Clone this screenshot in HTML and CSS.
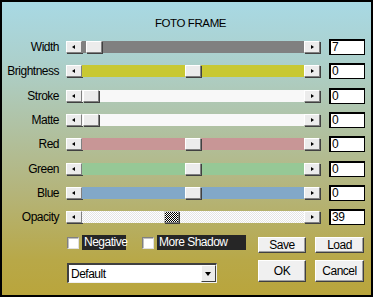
FILE: index.html
```html
<!DOCTYPE html>
<html>
<head>
<meta charset="utf-8">
<link rel="stylesheet" href="styles.css">
</head>
<body>
<div class="window">
  <div class="title">FOTO FRAME</div>
  <div class="rows">
    <div class="row">
      <span class="label">Width</span>
      <div class="slider"><span class="arrow left"></span><div class="track c-gray"><span class="thumb" style="left:4px"></span></div><span class="arrow right"></span></div>
      <div class="value">7</div>
    </div>
    <div class="row">
      <span class="label">Brightness</span>
      <div class="slider"><span class="arrow left"></span><div class="track c-yellow"><span class="thumb" style="left:103px"></span></div><span class="arrow right"></span></div>
      <div class="value">0</div>
    </div>
    <div class="row">
      <span class="label">Stroke</span>
      <div class="slider"><span class="arrow left"></span><div class="track c-white"><span class="thumb" style="left:1px"></span></div><span class="arrow right"></span></div>
      <div class="value">0</div>
    </div>
    <div class="row">
      <span class="label">Matte</span>
      <div class="slider"><span class="arrow left"></span><div class="track c-white"><span class="thumb" style="left:1px"></span></div><span class="arrow right"></span></div>
      <div class="value">0</div>
    </div>
    <div class="row">
      <span class="label">Red</span>
      <div class="slider"><span class="arrow left"></span><div class="track c-red"><span class="thumb" style="left:103px"></span></div><span class="arrow right"></span></div>
      <div class="value">0</div>
    </div>
    <div class="row">
      <span class="label">Green</span>
      <div class="slider"><span class="arrow left"></span><div class="track c-green"><span class="thumb" style="left:103px"></span></div><span class="arrow right"></span></div>
      <div class="value">0</div>
    </div>
    <div class="row">
      <span class="label">Blue</span>
      <div class="slider"><span class="arrow left"></span><div class="track c-blue"><span class="thumb" style="left:103px"></span></div><span class="arrow right"></span></div>
      <div class="value">0</div>
    </div>
    <div class="row">
      <span class="label">Opacity</span>
      <div class="slider"><span class="arrow left"></span><div class="track c-dither"><span class="thumb dither" style="left:82px"></span></div><span class="arrow right"></span></div>
      <div class="value">39</div>
    </div>
  </div>
  <div class="bottom">
    <div class="left-col">
      <div class="checks">
        <span class="checkbox"></span><span class="check-label">Negative</span>
        <span class="checkbox second"></span><span class="check-label wide">More Shadow</span>
      </div>
      <div class="select"><span class="select-text">Default</span><span class="select-btn"></span></div>
    </div>
    <div class="buttons">
      <div class="btn small">Save</div>
      <div class="btn small">Load</div>
      <div class="btn big">OK</div>
      <div class="btn big">Cancel</div>
    </div>
  </div>
</div>
</body>
</html>
```
FILE: styles.css
```css
html, body {
  margin: 0;
  padding: 0;
}
body {
  font-family: "Liberation Sans", Arial, sans-serif;
  font-size: 12px;
  letter-spacing: -0.5px;
  color: #000;
}
.window {
  width: 373px;
  height: 297px;
  box-sizing: border-box;
  border: 2px solid #000;
  background: linear-gradient(180deg, #a8d9e4 0%, #acd0cc 20%, #b0c2a4 42%, #b4b47a 65%, #b8a848 88%, #b9a53c 100%);
  overflow: hidden;
}
.title {
  height: 20px;
  padding-top: 13px;
  line-height: 16px;
  text-align: center;
  padding-left: 8px;
  letter-spacing: -0.4px;
  font-size: 11.5px;
}
.rows {
  display: grid;
  grid-auto-rows: 24.3px;
}
.row {
  display: grid;
  grid-template-columns: 57px 261px 45px;
  align-items: center;
}
.label {
  text-align: right;
  line-height: 14px;
  white-space: nowrap;
}
.slider {
  margin-left: 7px;
  height: 12px;
  display: flex;
}
.value {
  margin-left: 9px;
  height: 16px;
  box-sizing: border-box;
  border: 1px solid #000;
  border-top-width: 2px;
  border-left-width: 2px;
  background: #fff;
  line-height: 13px;
  padding-left: 1px;
}
.arrow, .thumb {
  box-sizing: border-box;
  width: 16px;
  height: 12px;
  background: #ececec;
  border-top: 1px solid #fff;
  border-left: 1px solid #fff;
  border-right: 1px solid #808080;
  border-bottom: 1px solid #808080;
  box-shadow: 1px 1px 0 #404040;
}
.arrow {
  position: relative;
  flex: none;
}
.arrow::after {
  content: "";
  position: absolute;
  top: 3px;
  width: 0;
  height: 0;
  border-top: 2.5px solid transparent;
  border-bottom: 2.5px solid transparent;
}
.arrow.left::after {
  left: 5px;
  border-right: 3px solid #000;
}
.arrow.right::after {
  left: 6px;
  border-left: 3px solid #000;
}
.track {
  flex: 1;
  position: relative;
  height: 12px;
}
.thumb {
  position: absolute;
  top: 0;
}
.thumb.dither {
  width: 15px;
  background-color: #fff;
  background-image: repeating-conic-gradient(#000 0 25%, #fff 0 50%);
  background-size: 2px 2px;
  border-top-color: #c0c0c0;
  border-left-color: #c0c0c0;
}
.c-gray { background: #808080; }
.c-yellow { background: #c8c832; }
.c-white { background: #f8f8f8; }
.c-red { background: #c89696; }
.c-green { background: #96c896; }
.c-blue { background: #82a8c8; }
.c-dither {
  background-color: #fff;
  background-image: repeating-conic-gradient(#e4e4e4 0 25%, #fff 0 50%);
  background-size: 2px 2px;
}
.bottom {
  display: flex;
  align-items: flex-start;
  padding-left: 65px;
  margin-top: 6px;
}
.left-col {
  width: 191px;
}
.checks {
  display: flex;
  align-items: center;
  height: 15px;
}
.checkbox {
  width: 12px;
  height: 12px;
  box-sizing: border-box;
  background: #fff;
  border-top: 1px solid #808080;
  border-left: 1px solid #808080;
  border-right: 1px solid #e0e0e0;
  border-bottom: 1px solid #e0e0e0;
  box-shadow: inset 1px 1px 0 #c0c0c0;
  margin-right: 3px;
}
.checkbox.second {
  margin-left: 16px;
}
.check-label {
  background: #262626;
  color: #fff;
  height: 15px;
  line-height: 15px;
  width: 44px;
  box-sizing: border-box;
  padding-left: 2px;
}
.check-label.wide {
  width: 89px;
}
.select {
  margin-top: 13px;
  width: 150px;
  height: 20px;
  box-sizing: border-box;
  background: #fff;
  border-top: 2px solid #404040;
  border-left: 2px solid #404040;
  border-right: 1px solid #f0f0f0;
  border-bottom: 1px solid #f0f0f0;
  display: flex;
  align-items: center;
}
.select-text {
  flex: 1;
  padding-left: 2px;
}
.select-btn {
  width: 15px;
  height: 17px;
  box-sizing: border-box;
  background: #ececec;
  border-top: 1px solid #fff;
  border-left: 1px solid #fff;
  border-right: 1px solid #404040;
  border-bottom: 1px solid #404040;
  position: relative;
}
.select-btn::after {
  content: "";
  position: absolute;
  left: 3px;
  top: 6px;
  border-left: 3.5px solid transparent;
  border-right: 3.5px solid transparent;
  border-top: 4px solid #000;
}
.buttons {
  margin-top: 2px;
  display: grid;
  grid-template-columns: 48px 49px;
  grid-template-rows: 16px 22px;
  column-gap: 9px;
  row-gap: 7px;
}
.btn {
  box-sizing: border-box;
  background: #f0f0f0;
  border-top: 1px solid #fff;
  border-left: 1px solid #fff;
  border-right: 1px solid #404040;
  border-bottom: 1px solid #404040;
  box-shadow: inset -1px -1px 0 #a0a0a0;
  text-align: center;
  display: flex;
  align-items: center;
  justify-content: center;
}
```
